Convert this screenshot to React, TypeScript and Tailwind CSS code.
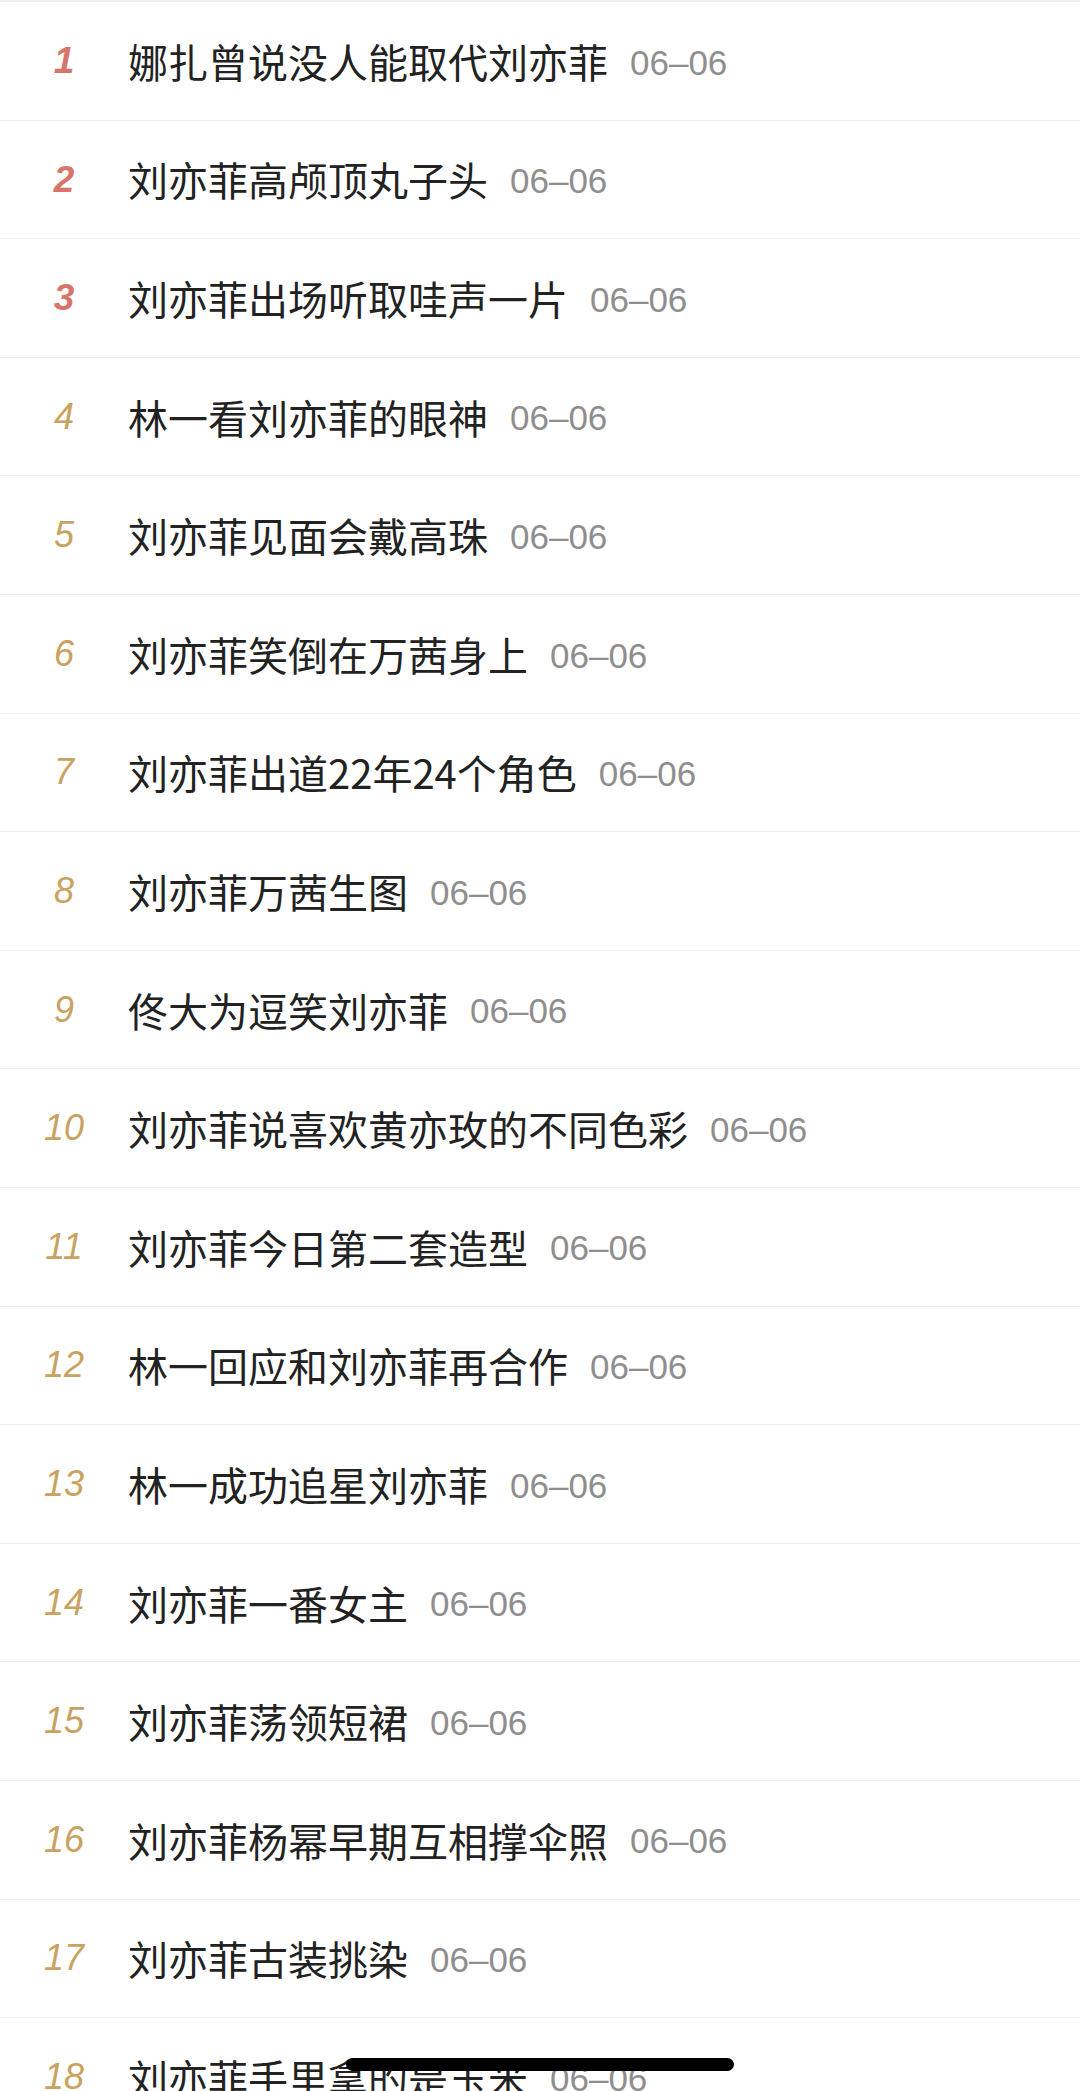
const items = [
  "娜扎曾说没人能取代刘亦菲",
  "刘亦菲高颅顶丸子头",
  "刘亦菲出场听取哇声一片",
  "林一看刘亦菲的眼神",
  "刘亦菲见面会戴高珠",
  "刘亦菲笑倒在万茜身上",
  "刘亦菲出道22年24个角色",
  "刘亦菲万茜生图",
  "佟大为逗笑刘亦菲",
  "刘亦菲说喜欢黄亦玫的不同色彩",
  "刘亦菲今日第二套造型",
  "林一回应和刘亦菲再合作",
  "林一成功追星刘亦菲",
  "刘亦菲一番女主",
  "刘亦菲荡领短裙",
  "刘亦菲杨幂早期互相撑伞照",
  "刘亦菲古装挑染",
  "刘亦菲手里拿的是玉米",
];

export default function App() {
  return (
    <div className="relative h-[2091px] overflow-hidden bg-white">
      <div className="h-[2px] bg-[#efefef]" />
      {items.map((title, idx) => (
        <div key={idx} className="flex h-[118.6px] items-center border-b border-[#eeeeee]">
          <span
            className={
              idx < 3
                ? "w-[128px] text-center font-['Liberation_Sans',sans-serif] text-[37px] font-bold italic text-[#d6766b]"
                : "w-[128px] text-center font-['Liberation_Sans',sans-serif] text-[36px] italic text-[#c9a25f]"
            }
          >
            {idx + 1}
          </span>
          <span className="font-['Noto_Sans_CJK_SC',sans-serif] text-[40px] text-[#222222]">{title}</span>
          <span className="ml-[22px] mt-[4px] font-['Liberation_Sans',sans-serif] text-[35px] text-[#8e8e8e]">06–06</span>
        </div>
      ))}
      <div className="absolute left-[346px] top-[2058px] h-[13px] w-[388px] rounded-full bg-black" />
    </div>
  );
}
